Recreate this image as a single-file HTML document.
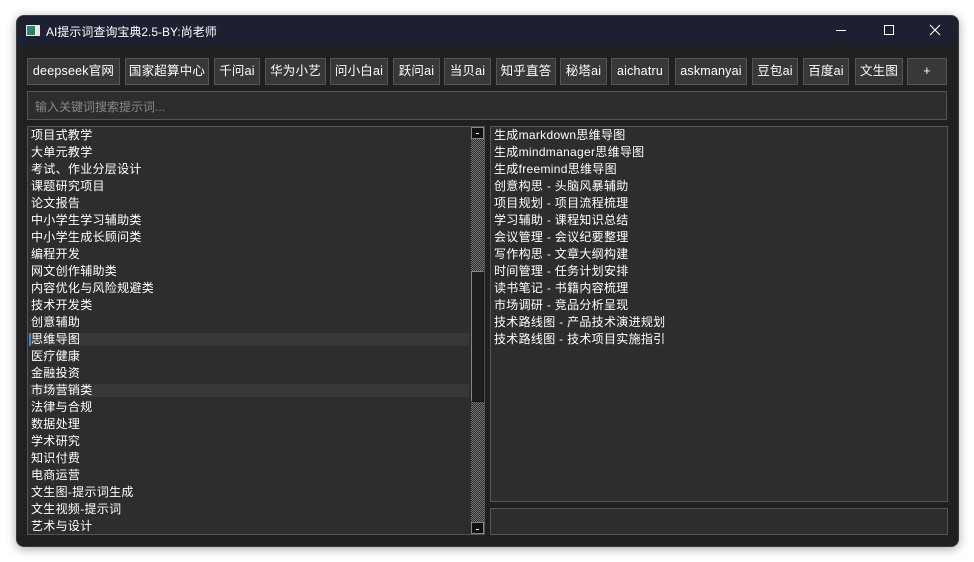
<!DOCTYPE html>
<html><head><meta charset="utf-8"><style>
*{margin:0;padding:0;box-sizing:border-box}
body{width:974px;height:562px;background:#fff;position:relative;overflow:hidden;font-family:"Liberation Sans","Noto Sans CJK SC",sans-serif;font-size:12px;color:#fff}
.win{position:absolute;left:16px;top:15px;width:943px;height:532px;background:#202020;border-radius:8px;box-shadow:0 2px 10px rgba(0,0,0,.35);overflow:hidden;border:1px solid #3a3a3a}
.tb{position:absolute;left:0;top:0;width:100%;height:30px;background:#1c2030}
.tb .t{position:absolute;left:29px;top:7px;font-size:12px;color:#fff}
.ic{position:absolute;left:9px;top:9px;width:14px;height:11px;background:#e8e8e8}
.ic:before{content:"";position:absolute;left:1px;top:1px;width:8px;height:9px;background:linear-gradient(135deg,#2a8a9a,#3a7a3a)}
.btn{position:absolute;top:42px;height:27px;background:#383838;border:1px solid #555;color:#fff;font-size:12.5px;line-height:25px;text-align:center;letter-spacing:0.2px}
.box{position:absolute;background:#2d2d2d;border:1px solid #555}
.row{position:absolute;left:3px;height:17px;line-height:17px;font-size:12px;white-space:nowrap;letter-spacing:0.3px}
.hl{position:absolute;left:1px;width:440px;height:13px;background:#383838}
.chk{background-color:#555;background-image:repeating-conic-gradient(#2a2a2a 0 25%,#777 0 50%);background-size:2px 2px}
</style></head><body>
<div class="win">
 <div class="tb">
  <div class="ic"></div>
  <div class="t">AI提示词查询宝典2.5-BY:尚老师</div>
  <svg style="position:absolute;left:818px;top:8px" width="12" height="12"><line x1="1" y1="6.5" x2="11" y2="6.5" stroke="#fff" stroke-width="1"/></svg>
  <svg style="position:absolute;left:866px;top:8px" width="12" height="12"><rect x="1.5" y="1.5" width="9" height="9" fill="none" stroke="#fff" stroke-width="1"/></svg>
  <svg style="position:absolute;left:912px;top:8px" width="12" height="12"><path d="M1 1L11 11M11 1L1 11" stroke="#fff" stroke-width="1.1"/></svg>
 </div>
 <div class="btn" style="left:10px;width:93px">deepseek官网</div>
 <div class="btn" style="left:108px;width:84px">国家超算中心</div>
 <div class="btn" style="left:197px;width:46px">千问ai</div>
 <div class="btn" style="left:248px;width:61px">华为小艺</div>
 <div class="btn" style="left:313px;width:58px">问小白ai</div>
 <div class="btn" style="left:376px;width:47px">跃问ai</div>
 <div class="btn" style="left:427px;width:47px">当贝ai</div>
 <div class="btn" style="left:479px;width:60px">知乎直答</div>
 <div class="btn" style="left:543px;width:47px">秘塔ai</div>
 <div class="btn" style="left:594px;width:58px">aichatru</div>
 <div class="btn" style="left:658px;width:72px">askmanyai</div>
 <div class="btn" style="left:735px;width:46px">豆包ai</div>
 <div class="btn" style="left:786px;width:46px">百度ai</div>
 <div class="btn" style="left:838px;width:48px">文生图</div>
 <div class="btn" style="left:890px;width:40px">+</div>
 <div class="box" style="left:10px;top:75px;width:920px;height:29px"><span style="position:absolute;left:7px;top:6px;color:#888;font-size:12px">输入关键词搜索提示词...</span></div>
 <div class="box" style="left:10px;top:110px;width:458px;height:409px">
  <div class="hl" style="top:206px;border-left:2px solid #3a8ad0"></div>
  <div class="hl" style="top:257px"></div>
  <div class="row" style="top:0">项目式教学</div>
  <div class="row" style="top:17px">大单元教学</div>
  <div class="row" style="top:34px">考试、作业分层设计</div>
  <div class="row" style="top:51px">课题研究项目</div>
  <div class="row" style="top:68px">论文报告</div>
  <div class="row" style="top:85px">中小学生学习辅助类</div>
  <div class="row" style="top:102px">中小学生成长顾问类</div>
  <div class="row" style="top:119px">编程开发</div>
  <div class="row" style="top:136px">网文创作辅助类</div>
  <div class="row" style="top:153px">内容优化与风险规避类</div>
  <div class="row" style="top:170px">技术开发类</div>
  <div class="row" style="top:187px">创意辅助</div>
  <div class="row" style="top:204px">思维导图</div>
  <div class="row" style="top:221px">医疗健康</div>
  <div class="row" style="top:238px">金融投资</div>
  <div class="row" style="top:255px">市场营销类</div>
  <div class="row" style="top:272px">法律与合规</div>
  <div class="row" style="top:289px">数据处理</div>
  <div class="row" style="top:306px">学术研究</div>
  <div class="row" style="top:323px">知识付费</div>
  <div class="row" style="top:340px">电商运营</div>
  <div class="row" style="top:357px">文生图-提示词生成</div>
  <div class="row" style="top:374px">文生视频-提示词</div>
  <div class="row" style="top:391px">艺术与设计</div>
  <div class="chk" style="position:absolute;left:443px;top:0;width:13px;height:407px"></div>
  <div style="position:absolute;left:443px;top:0;width:13px;height:12px;background:#111;border:1px solid #888"><div style="position:absolute;left:4px;top:5px;width:3px;height:1px;background:#fff"></div></div>
  <div style="position:absolute;left:443px;top:144px;width:13px;height:131px;background:#1e1e1e;border:1px solid #111;border-left:1px solid #888;border-top:1px solid #888"></div>
  <div style="position:absolute;left:443px;top:395px;width:13px;height:12px;background:#111;border:1px solid #888"><div style="position:absolute;left:4px;top:6px;width:3px;height:1px;background:#fff"></div></div>
 </div>
 <div class="box" style="left:473px;top:110px;width:458px;height:376px">
  <div class="row" style="top:0">生成markdown思维导图</div>
  <div class="row" style="top:17px">生成mindmanager思维导图</div>
  <div class="row" style="top:34px">生成freemind思维导图</div>
  <div class="row" style="top:51px">创意构思 - 头脑风暴辅助</div>
  <div class="row" style="top:68px">项目规划 - 项目流程梳理</div>
  <div class="row" style="top:85px">学习辅助 - 课程知识总结</div>
  <div class="row" style="top:102px">会议管理 - 会议纪要整理</div>
  <div class="row" style="top:119px">写作构思 - 文章大纲构建</div>
  <div class="row" style="top:136px">时间管理 - 任务计划安排</div>
  <div class="row" style="top:153px">读书笔记 - 书籍内容梳理</div>
  <div class="row" style="top:170px">市场调研 - 竞品分析呈现</div>
  <div class="row" style="top:187px">技术路线图 - 产品技术演进规划</div>
  <div class="row" style="top:204px">技术路线图 - 技术项目实施指引</div>
 </div>
 <div class="box" style="left:473px;top:492px;width:458px;height:27px"></div>
</div>
</body></html>
